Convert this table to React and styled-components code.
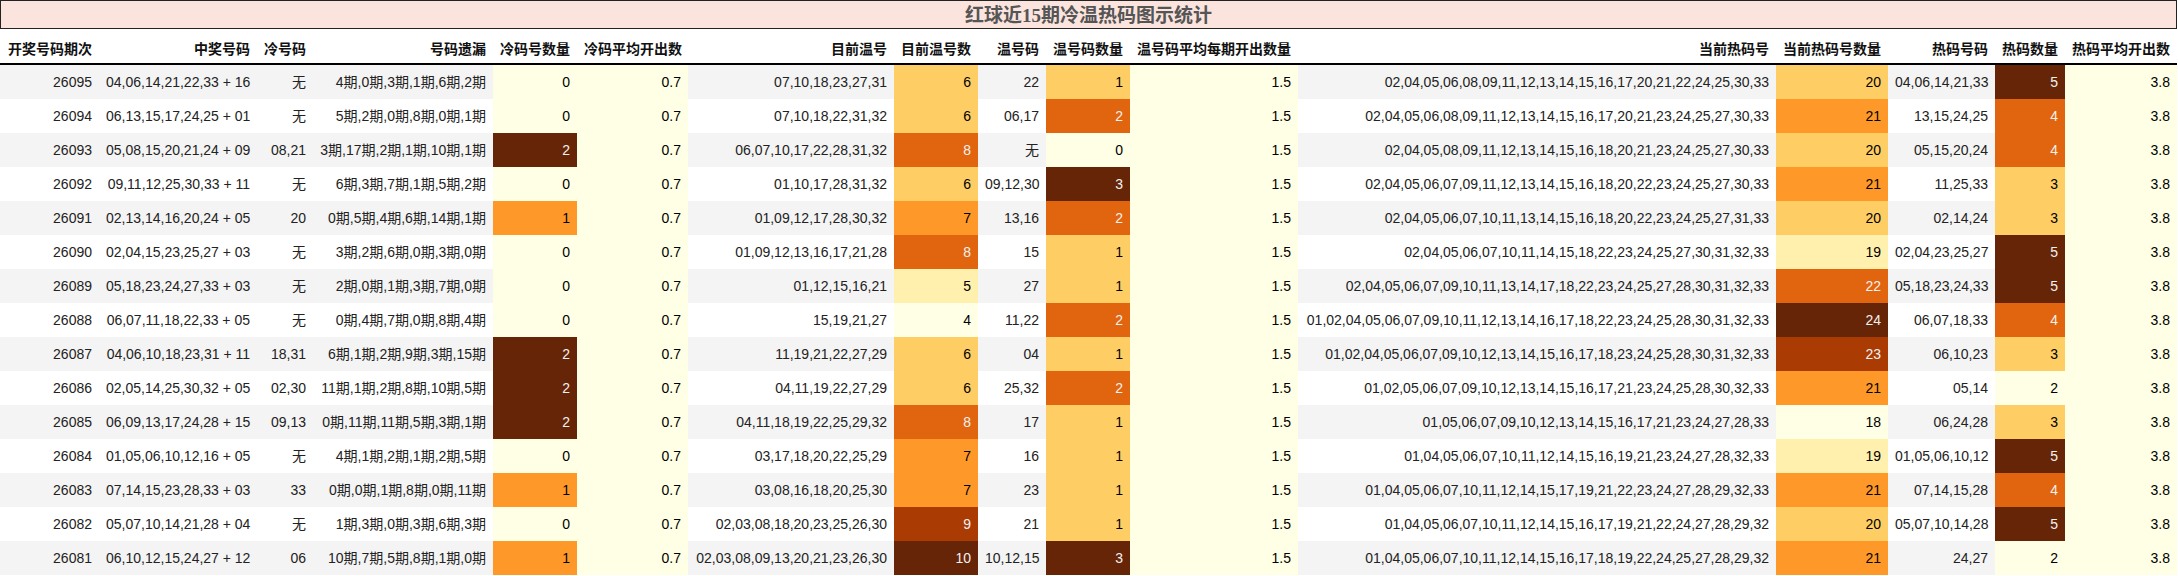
import React from "react";
import styled, { createGlobalStyle } from "styled-components";

const GlobalStyle = createGlobalStyle`
  html, body {
    margin: 0;
    padding: 0;
    background: #ffffff;
  }
  body {
    font-family: "Liberation Sans", "Noto Sans CJK SC", sans-serif;
  }
`;

const HEADERS = [
  "开奖号码期次", "中奖号码", "冷号码", "号码遗漏", "冷码号数量", "冷码平均开出数",
  "目前温号", "目前温号数", "温号码", "温号码数量", "温号码平均每期开出数量",
  "当前热码号", "当前热码号数量", "热码号码", "热码数量", "热码平均开出数",
];

const WIDTHS = [99, 158, 56, 180, 84, 111, 206, 84, 68, 84, 168, 478, 112, 107, 70, 112];

// columns shaded with the YlOrBr gradient, scaled per column
const GRADIENT = [4, 5, 7, 9, 10, 12, 14, 15];

const RAW = [
  "26095|04,06,14,21,22,33 + 16|无|4期,0期,3期,1期,6期,2期|0|0.7|07,10,18,23,27,31|6|22|1|1.5|02,04,05,06,08,09,11,12,13,14,15,16,17,20,21,22,24,25,30,33|20|04,06,14,21,33|5|3.8",
  "26094|06,13,15,17,24,25 + 01|无|5期,2期,0期,8期,0期,1期|0|0.7|07,10,18,22,31,32|6|06,17|2|1.5|02,04,05,06,08,09,11,12,13,14,15,16,17,20,21,23,24,25,27,30,33|21|13,15,24,25|4|3.8",
  "26093|05,08,15,20,21,24 + 09|08,21|3期,17期,2期,1期,10期,1期|2|0.7|06,07,10,17,22,28,31,32|8|无|0|1.5|02,04,05,08,09,11,12,13,14,15,16,18,20,21,23,24,25,27,30,33|20|05,15,20,24|4|3.8",
  "26092|09,11,12,25,30,33 + 11|无|6期,3期,7期,1期,5期,2期|0|0.7|01,10,17,28,31,32|6|09,12,30|3|1.5|02,04,05,06,07,09,11,12,13,14,15,16,18,20,22,23,24,25,27,30,33|21|11,25,33|3|3.8",
  "26091|02,13,14,16,20,24 + 05|20|0期,5期,4期,6期,14期,1期|1|0.7|01,09,12,17,28,30,32|7|13,16|2|1.5|02,04,05,06,07,10,11,13,14,15,16,18,20,22,23,24,25,27,31,33|20|02,14,24|3|3.8",
  "26090|02,04,15,23,25,27 + 03|无|3期,2期,6期,0期,3期,0期|0|0.7|01,09,12,13,16,17,21,28|8|15|1|1.5|02,04,05,06,07,10,11,14,15,18,22,23,24,25,27,30,31,32,33|19|02,04,23,25,27|5|3.8",
  "26089|05,18,23,24,27,33 + 03|无|2期,0期,1期,3期,7期,0期|0|0.7|01,12,15,16,21|5|27|1|1.5|02,04,05,06,07,09,10,11,13,14,17,18,22,23,24,25,27,28,30,31,32,33|22|05,18,23,24,33|5|3.8",
  "26088|06,07,11,18,22,33 + 05|无|0期,4期,7期,0期,8期,4期|0|0.7|15,19,21,27|4|11,22|2|1.5|01,02,04,05,06,07,09,10,11,12,13,14,16,17,18,22,23,24,25,28,30,31,32,33|24|06,07,18,33|4|3.8",
  "26087|04,06,10,18,23,31 + 11|18,31|6期,1期,2期,9期,3期,15期|2|0.7|11,19,21,22,27,29|6|04|1|1.5|01,02,04,05,06,07,09,10,12,13,14,15,16,17,18,23,24,25,28,30,31,32,33|23|06,10,23|3|3.8",
  "26086|02,05,14,25,30,32 + 05|02,30|11期,1期,2期,8期,10期,5期|2|0.7|04,11,19,22,27,29|6|25,32|2|1.5|01,02,05,06,07,09,10,12,13,14,15,16,17,21,23,24,25,28,30,32,33|21|05,14|2|3.8",
  "26085|06,09,13,17,24,28 + 15|09,13|0期,11期,11期,5期,3期,1期|2|0.7|04,11,18,19,22,25,29,32|8|17|1|1.5|01,05,06,07,09,10,12,13,14,15,16,17,21,23,24,27,28,33|18|06,24,28|3|3.8",
  "26084|01,05,06,10,12,16 + 05|无|4期,1期,2期,1期,2期,5期|0|0.7|03,17,18,20,22,25,29|7|16|1|1.5|01,04,05,06,07,10,11,12,14,15,16,19,21,23,24,27,28,32,33|19|01,05,06,10,12|5|3.8",
  "26083|07,14,15,23,28,33 + 03|33|0期,0期,1期,8期,0期,11期|1|0.7|03,08,16,18,20,25,30|7|23|1|1.5|01,04,05,06,07,10,11,12,14,15,17,19,21,22,23,24,27,28,29,32,33|21|07,14,15,28|4|3.8",
  "26082|05,07,10,14,21,28 + 04|无|1期,3期,0期,3期,6期,3期|0|0.7|02,03,08,18,20,23,25,26,30|9|21|1|1.5|01,04,05,06,07,10,11,12,14,15,16,17,19,21,22,24,27,28,29,32|20|05,07,10,14,28|5|3.8",
  "26081|06,10,12,15,24,27 + 12|06|10期,7期,5期,8期,1期,0期|1|0.7|02,03,08,09,13,20,21,23,26,30|10|10,12,15|3|1.5|01,04,05,06,07,10,11,12,14,15,16,17,18,19,22,24,25,27,28,29,32|21|24,27|2|3.8",
];

const ROWS = RAW.map((r) => r.split("|"));

const YLORBR = [
  [255, 255, 229], [255, 247, 188], [254, 227, 145], [254, 196, 79], [254, 153, 41],
  [236, 112, 20], [204, 76, 2], [153, 52, 4], [102, 37, 6],
];

function ylOrBr(t) {
  const x = Math.max(0, Math.min(1, t)) * 8;
  const i = Math.min(7, Math.floor(x));
  const f = x - i;
  return YLORBR[i].map((c, k) => Math.round(c + (YLORBR[i + 1][k] - c) * f));
}

function luminance([r, g, b]) {
  const lin = (c) => {
    const v = c / 255;
    return v <= 0.03928 ? v / 12.92 : Math.pow((v + 0.055) / 1.055, 2.4);
  };
  return 0.2126 * lin(r) + 0.7152 * lin(g) + 0.0722 * lin(b);
}

const ranges = {};
GRADIENT.forEach((col) => {
  const vals = ROWS.map((r) => parseFloat(r[col]));
  ranges[col] = [Math.min(...vals), Math.max(...vals)];
});

function shade(col, value) {
  const [lo, hi] = ranges[col];
  const t = hi === lo ? 0 : (parseFloat(value) - lo) / (hi - lo);
  const rgb = ylOrBr(t);
  return {
    bg: `rgb(${rgb.join(",")})`,
    fg: luminance(rgb) < 0.408 ? "#f1f1f1" : "#000000",
  };
}

const Page = styled.div`
  width: 2177px;
`;

const Title = styled.div`
  box-sizing: border-box;
  width: 100%;
  height: 29px;
  border: 1px solid #222;
  background: #fce4de;
  color: #555;
  font-family: "Liberation Serif", "Noto Sans CJK SC", serif;
  font-size: 19px;
  font-weight: bold;
  line-height: 29px;
  text-align: center;
`;

const Table = styled.table`
  width: 2177px;
  table-layout: fixed;
  border-collapse: separate;
  border-spacing: 0;
  font-size: 14px;
  color: #222;
`;

const HeadCell = styled.th`
  padding: 11px 7px 4px;
  line-height: 19px;
  border-bottom: 2px solid #000;
  font-family: "Liberation Sans", "Noto Sans CJK SC", sans-serif;
  font-weight: bold;
  font-size: 14px;
  color: #111;
  text-align: right;
  vertical-align: bottom;
  white-space: nowrap;
`;

const Row = styled.tr`
  background: ${(p) => (p.$stripe ? "#f4f4f4" : "#ffffff")};
`;

const Cell = styled.td`
  height: 34px;
  padding: 0 7px;
  line-height: 18px;
  text-align: right;
  vertical-align: middle;
  white-space: nowrap;
  overflow: hidden;
  background: ${(p) => p.$bg || "transparent"};
  color: ${(p) => p.$fg || "#222"};
`;

export default function App() {
  return (
    <Page>
      <GlobalStyle />
      <Title>红球近15期冷温热码图示统计</Title>
      <Table>
        <colgroup>
          {WIDTHS.map((w, i) => (
            <col key={i} style={{ width: w }} />
          ))}
        </colgroup>
        <thead>
          <tr>
            {HEADERS.map((h) => (
              <HeadCell key={h}>{h}</HeadCell>
            ))}
          </tr>
        </thead>
        <tbody>
          {ROWS.map((row, ri) => (
            <Row key={row[0]} $stripe={ri % 2 === 0}>
              {row.map((v, ci) => {
                const s = GRADIENT.includes(ci) ? shade(ci, v) : null;
                return (
                  <Cell key={ci} $bg={s && s.bg} $fg={s && s.fg}>
                    {v}
                  </Cell>
                );
              })}
            </Row>
          ))}
        </tbody>
      </Table>
    </Page>
  );
}
